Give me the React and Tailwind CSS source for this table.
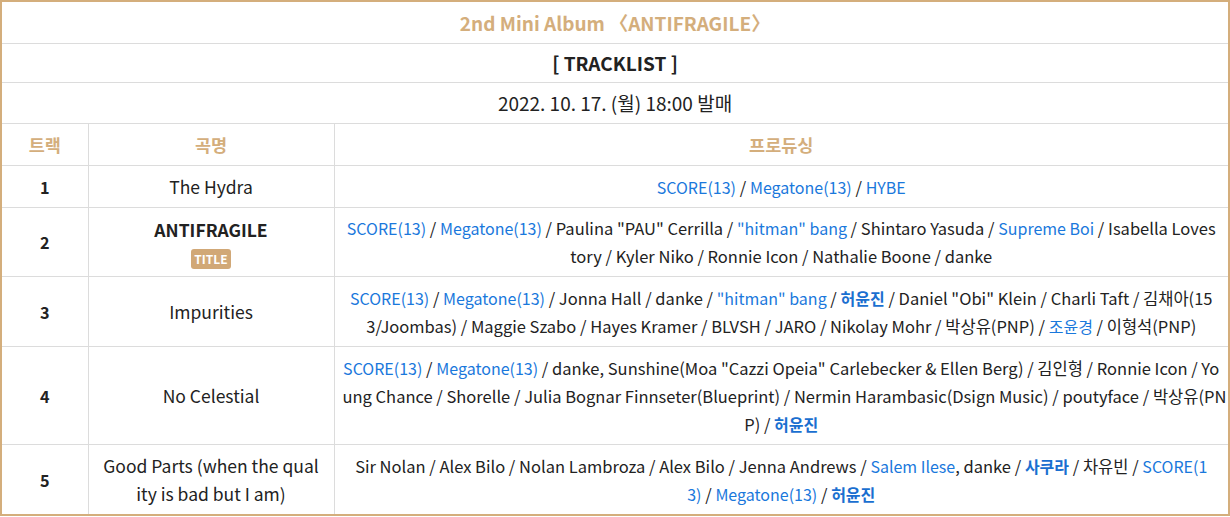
import React from "react";

const L = (t) => ({ t, c: "l" });
const B = (t) => ({ t, c: "b" });

const rows = [
  { n: "1", title: "The Hydra", lines: [[L("SCORE(13)"), " / ", L("Megatone(13)"), " / ", L("HYBE")]] },
  {
    n: "2",
    title: "ANTIFRAGILE",
    isTitle: true,
    lines: [
      [
        L("SCORE(13)"),
        " / ",
        L("Megatone(13)"),
        ' / Paulina "PAU" Cerrilla / ',
        L('"hitman" bang'),
        " / Shintaro Yasuda / ",
        L("Supreme Boi"),
        " / Isabella Loves",
      ],
      ["tory / Kyler Niko / Ronnie Icon / Nathalie Boone / danke"],
    ],
  },
  {
    n: "3",
    title: "Impurities",
    lines: [
      [
        L("SCORE(13)"),
        " / ",
        L("Megatone(13)"),
        " / Jonna Hall / danke / ",
        L('"hitman" bang'),
        " / ",
        B("허윤진"),
        ' / Daniel "Obi" Klein / Charli Taft / 김채아(15',
      ],
      [
        "3/Joombas) / Maggie Szabo / Hayes Kramer / BLVSH / JARO / Nikolay Mohr / 박상유(PNP) / ",
        L("조윤경"),
        " / 이형석(PNP)",
      ],
    ],
  },
  {
    n: "4",
    title: "No Celestial",
    lines: [
      [
        L("SCORE(13)"),
        " / ",
        L("Megatone(13)"),
        ' / danke, Sunshine(Moa "Cazzi Opeia" Carlebecker & Ellen Berg) / 김인형 / Ronnie Icon / Yo',
      ],
      ["ung Chance / Shorelle / Julia Bognar Finnseter(Blueprint) / Nermin Harambasic(Dsign Music) / poutyface / 박상유(PN"],
      ["P) / ", B("허윤진")],
    ],
  },
  {
    n: "5",
    title: "Good Parts (when the quality is bad but I am)",
    lines: [
      [
        "Sir Nolan / Alex Bilo / Nolan Lambroza / Alex Bilo / Jenna Andrews / ",
        L("Salem Ilese"),
        ", danke / ",
        B("사쿠라"),
        " / 차유빈 / ",
        L("SCORE(1"),
      ],
      [L("3)"), " / ", L("Megatone(13)"), " / ", B("허윤진")],
    ],
  },
];

function Seg({ s }) {
  if (typeof s === "string") {
    const parts = s.split(/( \/ )/).filter((p) => p !== "");
    return parts.map((p, i) => <span key={i}>{p}</span>);
  }
  if (s.c === "l") return <span className="text-[16px] text-[#1a78dc]">{s.t}</span>;
  return <span className="text-[16px] text-[#1a6fd0] font-bold">{s.t}</span>;
}

export default function App() {
  return (
    <div
      className="w-[1230px] h-[517px] bg-white text-[#222]"
      style={{ fontFamily: '"Noto Sans CJK KR", "Noto Sans", sans-serif' }}
    >
      <table className="w-[1230px] table-fixed border-collapse border-2 border-[#d4ae7c] text-center">
        <colgroup>
          <col className="w-[87px]" />
          <col className="w-[246px]" />
          <col />
        </colgroup>
        <tbody>
          <tr>
            <td colSpan={3} className="border border-[#dcdcdc] border-t-[#d4ae7c] py-[6.5px] text-[19px] leading-[28px] font-bold text-[#d4ae7c]">
              2nd Mini Album 〈ANTIFRAGILE〉
            </td>
          </tr>
          <tr>
            <td colSpan={3} className="border border-[#dcdcdc] py-[5px] text-[19px] leading-[28px] font-bold">
              [ TRACKLIST ]
            </td>
          </tr>
          <tr>
            <td colSpan={3} className="border border-[#dcdcdc] py-[6px] text-[19px] leading-[28px]">
              2022. 10. 17. (월) 18:00 발매
            </td>
          </tr>
          <tr className="text-[17.5px] leading-[28px] font-bold text-[#d4ae7c]">
            <td className="border border-[#dcdcdc] py-[6.5px]">트랙</td>
            <td className="border border-[#dcdcdc] py-[6.5px]">곡명</td>
            <td className="border border-[#dcdcdc] py-[6.5px]">프로듀싱</td>
          </tr>
          {rows.map((r) => (
            <tr key={r.n} className="text-[16.5px] leading-[28px]">
              <td className={`border border-[#dcdcdc] text-[16.2px] font-bold ${r.isTitle ? "py-[6px]" : "py-[6.5px]"}`}>{r.n}</td>
              <td className={`border border-[#dcdcdc] px-[13px] text-[17.5px] break-all ${r.isTitle ? "py-[6px]" : "py-[6.5px]"}`}>
                {r.isTitle ? (
                  <div className="flex flex-col items-center pt-[2px]">
                    <span className="font-bold leading-[24px]">{r.title}</span>
                    <span className="mt-[7px] rounded-[3px] bg-[#d1a877] px-[3px] text-[12px] leading-[20px] font-bold text-white">
                      TITLE
                    </span>
                  </div>
                ) : (
                  r.title
                )}
              </td>
              <td className={`border border-[#dcdcdc] px-[8px] ${r.isTitle ? "py-[6px]" : "py-[6.5px]"}`}>
                {r.lines.map((line, i) => (
                  <div key={i} className="whitespace-pre">
                    {line.map((s, j) => (
                      <Seg key={j} s={s} />
                    ))}
                  </div>
                ))}
              </td>
            </tr>
          ))}
        </tbody>
      </table>
    </div>
  );
}
